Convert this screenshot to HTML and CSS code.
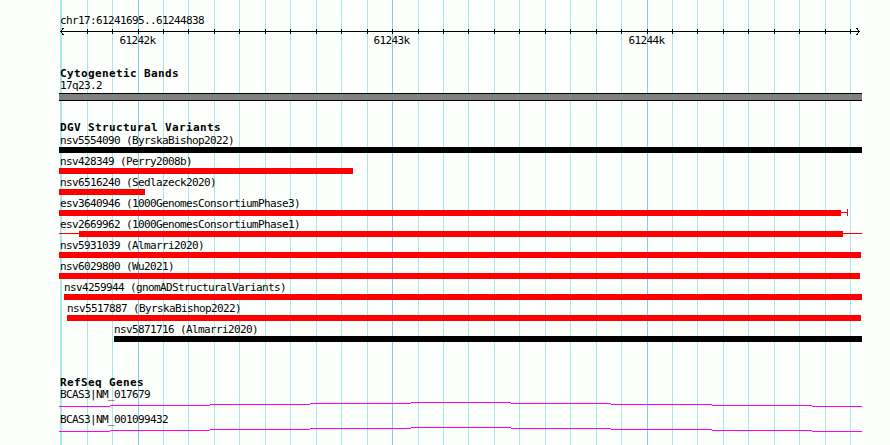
FILE: index.html
```html
<!DOCTYPE html>
<html>
<head>
<meta charset="utf-8">
<title>GBrowse tracks</title>
<link rel="stylesheet" href="styles.css">
</head>
<body>
<div class="browser">
  <svg class="grid" width="890" height="445" viewBox="0 0 890 445">
    <g class="minor">
      <rect x="60" y="0" width="1" height="445"/><rect x="61" y="0" width="1" height="445"/>
      <rect x="87" y="0" width="1" height="445"/><rect x="112" y="0" width="1" height="445"/>
      <rect x="163" y="0" width="1" height="445"/><rect x="188" y="0" width="1" height="445"/>
      <rect x="214" y="0" width="1" height="445"/><rect x="239" y="0" width="1" height="445"/>
      <rect x="265" y="0" width="1" height="445"/><rect x="290" y="0" width="1" height="445"/>
      <rect x="316" y="0" width="1" height="445"/><rect x="341" y="0" width="1" height="445"/>
      <rect x="367" y="0" width="1" height="445"/><rect x="418" y="0" width="1" height="445"/>
      <rect x="443" y="0" width="1" height="445"/><rect x="468" y="0" width="1" height="445"/>
      <rect x="494" y="0" width="1" height="445"/><rect x="519" y="0" width="1" height="445"/>
      <rect x="545" y="0" width="1" height="445"/><rect x="570" y="0" width="1" height="445"/>
      <rect x="596" y="0" width="1" height="445"/><rect x="621" y="0" width="1" height="445"/>
      <rect x="672" y="0" width="1" height="445"/><rect x="697" y="0" width="1" height="445"/>
      <rect x="723" y="0" width="1" height="445"/><rect x="748" y="0" width="1" height="445"/>
      <rect x="774" y="0" width="1" height="445"/><rect x="799" y="0" width="1" height="445"/>
      <rect x="825" y="0" width="1" height="445"/><rect x="850" y="0" width="1" height="445"/>
    </g>
    <g class="major">
      <rect x="138" y="0" width="1" height="445"/>
      <rect x="392" y="0" width="1" height="445"/>
      <rect x="647" y="0" width="1" height="445"/>
    </g>
  </svg>

  <div class="panel">
    <div class="label ruler-title">chr17:61241695..61244838</div>
    <svg class="ruler" width="890" height="20" viewBox="0 0 890 20">
      <rect x="60" y="4" width="800" height="1"/>
      <path class="arrow" d="M63.5 1 L60.5 4.5 L63.5 8"/>
      <path class="arrow" d="M856.5 1 L859.5 4.5 L856.5 8"/>
      <g class="ticks">
        <rect x="87" y="2" width="1" height="5"/><rect x="112" y="2" width="1" height="5"/>
        <rect x="138" y="2" width="1" height="5"/><rect x="163" y="2" width="1" height="5"/>
        <rect x="188" y="2" width="1" height="5"/><rect x="214" y="2" width="1" height="5"/>
        <rect x="239" y="2" width="1" height="5"/><rect x="265" y="2" width="1" height="5"/>
        <rect x="290" y="2" width="1" height="5"/><rect x="316" y="2" width="1" height="5"/>
        <rect x="341" y="2" width="1" height="5"/><rect x="367" y="2" width="1" height="5"/>
        <rect x="392" y="2" width="1" height="5"/><rect x="418" y="2" width="1" height="5"/>
        <rect x="443" y="2" width="1" height="5"/><rect x="468" y="2" width="1" height="5"/>
        <rect x="494" y="2" width="1" height="5"/><rect x="519" y="2" width="1" height="5"/>
        <rect x="545" y="2" width="1" height="5"/><rect x="570" y="2" width="1" height="5"/>
        <rect x="596" y="2" width="1" height="5"/><rect x="621" y="2" width="1" height="5"/>
        <rect x="647" y="2" width="1" height="5"/><rect x="672" y="2" width="1" height="5"/>
        <rect x="697" y="2" width="1" height="5"/><rect x="723" y="2" width="1" height="5"/>
        <rect x="748" y="2" width="1" height="5"/><rect x="774" y="2" width="1" height="5"/>
        <rect x="799" y="2" width="1" height="5"/><rect x="825" y="2" width="1" height="5"/>
        <rect x="850" y="2" width="1" height="5"/>
      </g>
      <text class="tick-label" x="137.5" y="17">61242k</text>
      <text class="tick-label" x="391.5" y="17">61243k</text>
      <text class="tick-label" x="646.5" y="17">61244k</text>
    </svg>

    <section class="track cyto">
      <div class="title">Cytogenetic Bands</div>
      <div class="label">17q23.2</div>
      <div class="band"></div>
    </section>

    <section class="track dgv">
      <div class="title">DGV Structural Variants</div>
      <div class="features">
        <div class="feature">
          <div class="label" style="margin-left:60px">nsv5554090 (ByrskaBishop2022)</div>
          <div class="glyph" style="margin-left:59px"><span class="seg black" style="width:803px"></span></div>
        </div>
        <div class="feature">
          <div class="label" style="margin-left:60px">nsv428349 (Perry2008b)</div>
          <div class="glyph" style="margin-left:59px"><span class="seg red" style="width:294px"></span></div>
        </div>
        <div class="feature">
          <div class="label" style="margin-left:60px">nsv6516240 (Sedlazeck2020)</div>
          <div class="glyph" style="margin-left:59px"><span class="seg red" style="width:86px"></span></div>
        </div>
        <div class="feature">
          <div class="label" style="margin-left:60px">esv3640946 (1000GenomesConsortiumPhase3)</div>
          <div class="glyph" style="margin-left:59px"><span class="seg red" style="width:782px"></span><span class="whisker" style="width:6px"></span><span class="cap"></span></div>
        </div>
        <div class="feature">
          <div class="label" style="margin-left:60px">esv2669962 (1000GenomesConsortiumPhase1)</div>
          <div class="glyph" style="margin-left:59px"><span class="whisker" style="width:20px"></span><span class="seg red" style="width:764px"></span><span class="whisker" style="width:19px"></span></div>
        </div>
        <div class="feature">
          <div class="label" style="margin-left:60px">nsv5931039 (Almarri2020)</div>
          <div class="glyph" style="margin-left:59px"><span class="seg red" style="width:802px"></span></div>
        </div>
        <div class="feature">
          <div class="label" style="margin-left:60px">nsv6029800 (Wu2021)</div>
          <div class="glyph" style="margin-left:59px"><span class="seg red" style="width:801px"></span></div>
        </div>
        <div class="feature">
          <div class="label" style="margin-left:64px">nsv4259944 (gnomADStructuralVariants)</div>
          <div class="glyph" style="margin-left:64px"><span class="seg red" style="width:798px"></span></div>
        </div>
        <div class="feature">
          <div class="label" style="margin-left:67px">nsv5517887 (ByrskaBishop2022)</div>
          <div class="glyph" style="margin-left:67px"><span class="seg red" style="width:794px"></span></div>
        </div>
        <div class="feature">
          <div class="label" style="margin-left:114px">nsv5871716 (Almarri2020)</div>
          <div class="glyph" style="margin-left:114px"><span class="seg black" style="width:748px"></span></div>
        </div>
      </div>
    </section>

    <section class="track refseq">
      <div class="title">RefSeq Genes</div>
      <div class="gene">
        <div class="label">BCAS3|NM_017679</div>
        <svg class="gene-line" width="890" height="12" viewBox="0 0 890 12">
          <rect x="59" y="5" width="51" height="1"/><rect x="110" y="4" width="100" height="1"/>
          <rect x="210" y="3" width="100" height="1"/><rect x="310" y="2" width="101" height="1"/>
          <rect x="411" y="1" width="100" height="1"/><rect x="511" y="2" width="100" height="1"/>
          <rect x="611" y="3" width="101" height="1"/><rect x="712" y="4" width="100" height="1"/>
          <rect x="812" y="5" width="50" height="1"/>
        </svg>
      </div>
      <div class="gene">
        <div class="label">BCAS3|NM_001099432</div>
        <svg class="gene-line" width="890" height="12" viewBox="0 0 890 12">
          <rect x="59" y="5" width="51" height="1"/><rect x="110" y="4" width="100" height="1"/>
          <rect x="210" y="3" width="100" height="1"/><rect x="310" y="2" width="101" height="1"/>
          <rect x="411" y="1" width="100" height="1"/><rect x="511" y="2" width="100" height="1"/>
          <rect x="611" y="3" width="101" height="1"/><rect x="712" y="4" width="100" height="1"/>
          <rect x="812" y="5" width="50" height="1"/>
        </svg>
      </div>
    </section>
  </div>
</div>
</body>
</html>
```
FILE: styles.css
```css
html, body {
  margin: 0;
  padding: 0;
  background: #fdfffd;
}

.browser {
  position: relative;
  width: 890px;
  height: 445px;
  overflow: hidden;
}

.grid {
  position: absolute;
  left: 0;
  top: 0;
  z-index: 0;
  shape-rendering: crispEdges;
}

.grid .minor { fill: #a9e7ec; }
.grid .major { fill: #8ccbe6; }

.panel {
  position: relative;
  z-index: 1;
  padding-top: 14px;
}

.label {
  font-family: "DejaVu Sans Mono", "Liberation Mono", monospace;
  font-size: 11px;
  letter-spacing: -0.62px;
  height: 13px;
  line-height: 14px;
  white-space: nowrap;
  color: #000;
}

.title {
  font-family: "DejaVu Sans Mono", "Liberation Mono", monospace;
  font-weight: bold;
  font-size: 11px;
  letter-spacing: 0.38px;
  height: 12px;
  line-height: 14px;
  margin-left: 60px;
  white-space: nowrap;
  color: #000;
}

.ruler-title { margin-left: 60px; }

.ruler {
  display: block;
  shape-rendering: crispEdges;
  fill: #000;
}

.ruler .arrow {
  fill: none;
  stroke: #000;
  stroke-width: 1;
}

.tick-label {
  font-family: "DejaVu Sans Mono", "Liberation Mono", monospace;
  font-size: 11px;
  letter-spacing: -0.62px;
  text-anchor: middle;
  fill: #000;
}

.cyto { margin-top: 20px; }
.cyto .label { margin-left: 60px; }

.band {
  margin: 1px 0 0 59px;
  width: 803px;
  height: 6px;
  background: #808080;
  border-top: 1px solid #000;
  border-bottom: 1px solid #000;
}

.dgv { margin-top: 20px; }
.features { margin-top: 1px; }

.feature { margin-bottom: 2px; }

.glyph {
  display: flex;
  align-items: flex-start;
  height: 6px;
}

.seg {
  display: block;
  height: 6px;
  flex: none;
}

.seg.red { background: #ff0000; }
.seg.black { background: #000; }

.whisker {
  display: block;
  flex: none;
  height: 1px;
  margin-top: 2px;
  background: #ff0000;
}

.cap {
  display: block;
  flex: none;
  width: 1px;
  height: 7px;
  margin-top: -1px;
  background: #ff0000;
}

.refseq { margin-top: 34px; }

.gene .label { margin-left: 60px; }

.gene-line {
  display: block;
  fill: #ff00ff;
  shape-rendering: crispEdges;
}
```
